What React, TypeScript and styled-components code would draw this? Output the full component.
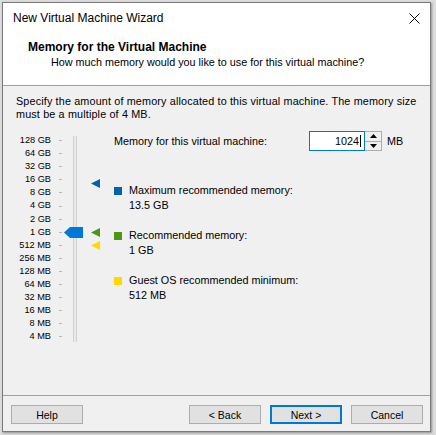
import React from 'react';
import styled, { createGlobalStyle } from 'styled-components';

const ROW = 13.1;
const TOP_MB = 131072;

const GlobalStyle = createGlobalStyle`
  html, body {
    margin: 0;
    padding: 0;
  }
  body {
    width: 436px;
    height: 435px;
    overflow: hidden;
    background: #dcdcdc;
    font-family: "Liberation Sans", Arial, sans-serif;
    color: #000;
  }
`;

const Screen = styled.div`
  padding: 2px 0 0 2px;
`;

const Window = styled.div`
  width: 429px;
  height: 430px;
  box-sizing: border-box;
  border: 1px solid #7a7a7a;
  box-shadow: 1px 1px 2px rgba(0, 0, 0, 0.35);
  background: #f0f0f0;
  display: flex;
  flex-direction: column;
`;

const TitleBar = styled.div`
  height: 30px;
  flex-shrink: 0;
  display: flex;
  align-items: center;
  justify-content: space-between;
  padding: 0 10px;
  background: #fff;
  font-size: 12px;
`;

const Header = styled.div`
  height: 53px;
  flex-shrink: 0;
  box-sizing: border-box;
  padding: 7px 0 0 25px;
  background: #fff;
  border-bottom: 1px solid #a0a0a0;
`;

const HeaderTitle = styled.div`
  font-size: 12px;
  font-weight: bold;
  line-height: 15px;
`;

const HeaderSub = styled.div`
  font-size: 10.8px;
  line-height: 15px;
  padding-left: 23px;
`;

const Body = styled.div`
  flex: 1;
  padding: 9px 12px 0 13px;
  font-size: 10.8px;
`;

const Description = styled.div`
  line-height: 13px;
  letter-spacing: 0.15px;
  white-space: nowrap;
`;

const Content = styled.div`
  display: flex;
  margin-top: 10px;
`;

const SliderArea = styled.div`
  position: relative;
  width: 98px;
  flex-shrink: 0;
  display: flex;
  padding-top: 3px;
`;

const Labels = styled.div`
  width: 35px;
  display: flex;
  flex-direction: column;
`;

const ScaleLabel = styled.div`
  height: ${ROW}px;
  line-height: ${ROW}px;
  font-size: 9.2px;
  text-align: right;
  white-space: nowrap;
`;

const Ticks = styled.div`
  margin-left: 8px;
  display: flex;
  flex-direction: column;
`;

const Tick = styled.div`
  height: ${ROW}px;
  display: flex;
  align-items: center;
  &::after {
    content: '';
    width: 3px;
    height: 1px;
    background: #b8b8b8;
  }
`;

const Track = styled.div`
  margin: 2px 0 2px 11px;
  width: 4px;
  box-sizing: border-box;
  border-left: 1px solid #d2d2d2;
  border-right: 1px solid #d2d2d2;
  background: #e8e8e8;
`;

const Thumb = styled.svg`
  position: absolute;
  left: 48px;
  width: 19px;
  height: 11px;
`;

const Marker = styled.svg`
  position: absolute;
  left: 75px;
  width: 9px;
  height: 9px;
`;

const Panel = styled.div`
  flex: 1;
  display: flex;
  flex-direction: column;
`;

const MemoryRow = styled.div`
  display: flex;
  align-items: center;
  height: 20px;
`;

const MemoryLabel = styled.div`
  width: 195px;
  white-space: nowrap;
`;

const ValueBox = styled.div`
  width: 56px;
  height: 20px;
  box-sizing: border-box;
  border: 1px solid #0078d7;
  background: #fff;
  display: flex;
  align-items: center;
  justify-content: flex-end;
  padding-right: 3px;
`;

const Caret = styled.span`
  width: 1px;
  height: 12px;
  background: #000;
  margin-left: 1px;
`;

const Spin = styled.div`
  width: 17px;
  height: 20px;
  box-sizing: border-box;
  border: 1px solid #adadad;
  border-left: none;
  display: flex;
  flex-direction: column;
`;

const SpinHalf = styled.div<{ $down?: boolean }>`
  flex: 1;
  display: flex;
  align-items: center;
  justify-content: center;
  background: #f0f0f0;
  border-top: ${p => (p.$down ? '1px solid #adadad' : 'none')};
`;

const Unit = styled.div`
  margin-left: 5px;
`;

const Legend = styled.div`
  margin-top: 32px;
  display: flex;
  flex-direction: column;
  gap: 15px;
`;

const LegendItem = styled.div`
  display: flex;
  gap: 7px;
`;

const Swatch = styled.div<{ $color: string }>`
  width: 8px;
  height: 8px;
  margin-top: 4px;
  background: ${p => p.$color};
`;

const LegendText = styled.div`
  line-height: 15px;
`;

const Footer = styled.div`
  flex-shrink: 0;
  height: 36px;
  box-sizing: border-box;
  border-top: 1px solid #a0a0a0;
  padding: 9px 7px 0 8px;
  display: flex;
  align-items: flex-start;
`;

const Button = styled.div<{ $primary?: boolean }>`
  width: 72px;
  height: 19px;
  box-sizing: border-box;
  border: ${p => (p.$primary ? '2px solid #0078d7' : '1px solid #adadad')};
  background: #e1e1e1;
  display: flex;
  align-items: center;
  justify-content: center;
  font-size: 10.5px;
`;

const Spacer = styled.div`
  flex: 1;
`;

const ButtonGroup = styled.div`
  display: flex;
  gap: 9px;
`;

const scale = [
  '128 GB', '64 GB', '32 GB', '16 GB', '8 GB', '4 GB', '2 GB', '1 GB',
  '512 MB', '256 MB', '128 MB', '64 MB', '32 MB', '16 MB', '8 MB', '4 MB',
];

// vertical centre of a value on the log2 scale, measured from the slider top
const centerFor = (mb: number) => 3 + (Math.log2(TOP_MB / mb) + 0.5) * ROW;

const legend = [
  { color: '#0063b1', title: 'Maximum recommended memory:', value: '13.5 GB', mb: 13824 },
  { color: '#4b9612', title: 'Recommended memory:', value: '1 GB', mb: 1024 },
  { color: '#ffd800', title: 'Guest OS recommended minimum:', value: '512 MB', mb: 512 },
];

const App: React.FC = () => {
  const current = 1024;

  return (
    <>
      <GlobalStyle />
      <Screen>
        <Window>
          <TitleBar>
            <span>New Virtual Machine Wizard</span>
            <svg width="11" height="11" viewBox="0 0 11 11">
              <path d="M0.5 0.5 L10.5 10.5 M10.5 0.5 L0.5 10.5" stroke="#000" strokeWidth="1" />
            </svg>
          </TitleBar>

          <Header>
            <HeaderTitle>Memory for the Virtual Machine</HeaderTitle>
            <HeaderSub>How much memory would you like to use for this virtual machine?</HeaderSub>
          </Header>

          <Body>
            <Description>
              Specify the amount of memory allocated to this virtual machine. The memory size
              <br />
              must be a multiple of 4 MB.
            </Description>

            <Content>
              <SliderArea>
                <Labels>
                  {scale.map(s => (
                    <ScaleLabel key={s}>{s}</ScaleLabel>
                  ))}
                </Labels>
                <Ticks>
                  {scale.map(s => (
                    <Tick key={s} />
                  ))}
                </Ticks>
                <Track />
                <Thumb viewBox="0 0 19 11" style={{ top: centerFor(current) - 5.5 }}>
                  <polygon points="0,5.5 6,0 19,0 19,11 6,11" fill="#0078d7" />
                </Thumb>
                {legend.map(l => (
                  <Marker key={l.title} viewBox="0 0 9 9" style={{ top: centerFor(l.mb) - 4.5 }}>
                    <polygon points="0,4.5 9,0 9,9" fill={l.color} />
                  </Marker>
                ))}
              </SliderArea>

              <Panel>
                <MemoryRow>
                  <MemoryLabel>Memory for this virtual machine:</MemoryLabel>
                  <ValueBox>
                    {current}
                    <Caret />
                  </ValueBox>
                  <Spin>
                    <SpinHalf>
                      <svg width="7" height="4" viewBox="0 0 7 4">
                        <polygon points="3.5,0 7,4 0,4" fill="#000" />
                      </svg>
                    </SpinHalf>
                    <SpinHalf $down>
                      <svg width="7" height="4" viewBox="0 0 7 4">
                        <polygon points="0,0 7,0 3.5,4" fill="#000" />
                      </svg>
                    </SpinHalf>
                  </Spin>
                  <Unit>MB</Unit>
                </MemoryRow>

                <Legend>
                  {legend.map(l => (
                    <LegendItem key={l.title}>
                      <Swatch $color={l.color} />
                      <LegendText>
                        {l.title}
                        <br />
                        {l.value}
                      </LegendText>
                    </LegendItem>
                  ))}
                </Legend>
              </Panel>
            </Content>
          </Body>

          <Footer>
            <Button>Help</Button>
            <Spacer />
            <ButtonGroup>
              <Button>&lt; Back</Button>
              <Button $primary>Next &gt;</Button>
              <Button>Cancel</Button>
            </ButtonGroup>
          </Footer>
        </Window>
      </Screen>
    </>
  );
};

export default App;
